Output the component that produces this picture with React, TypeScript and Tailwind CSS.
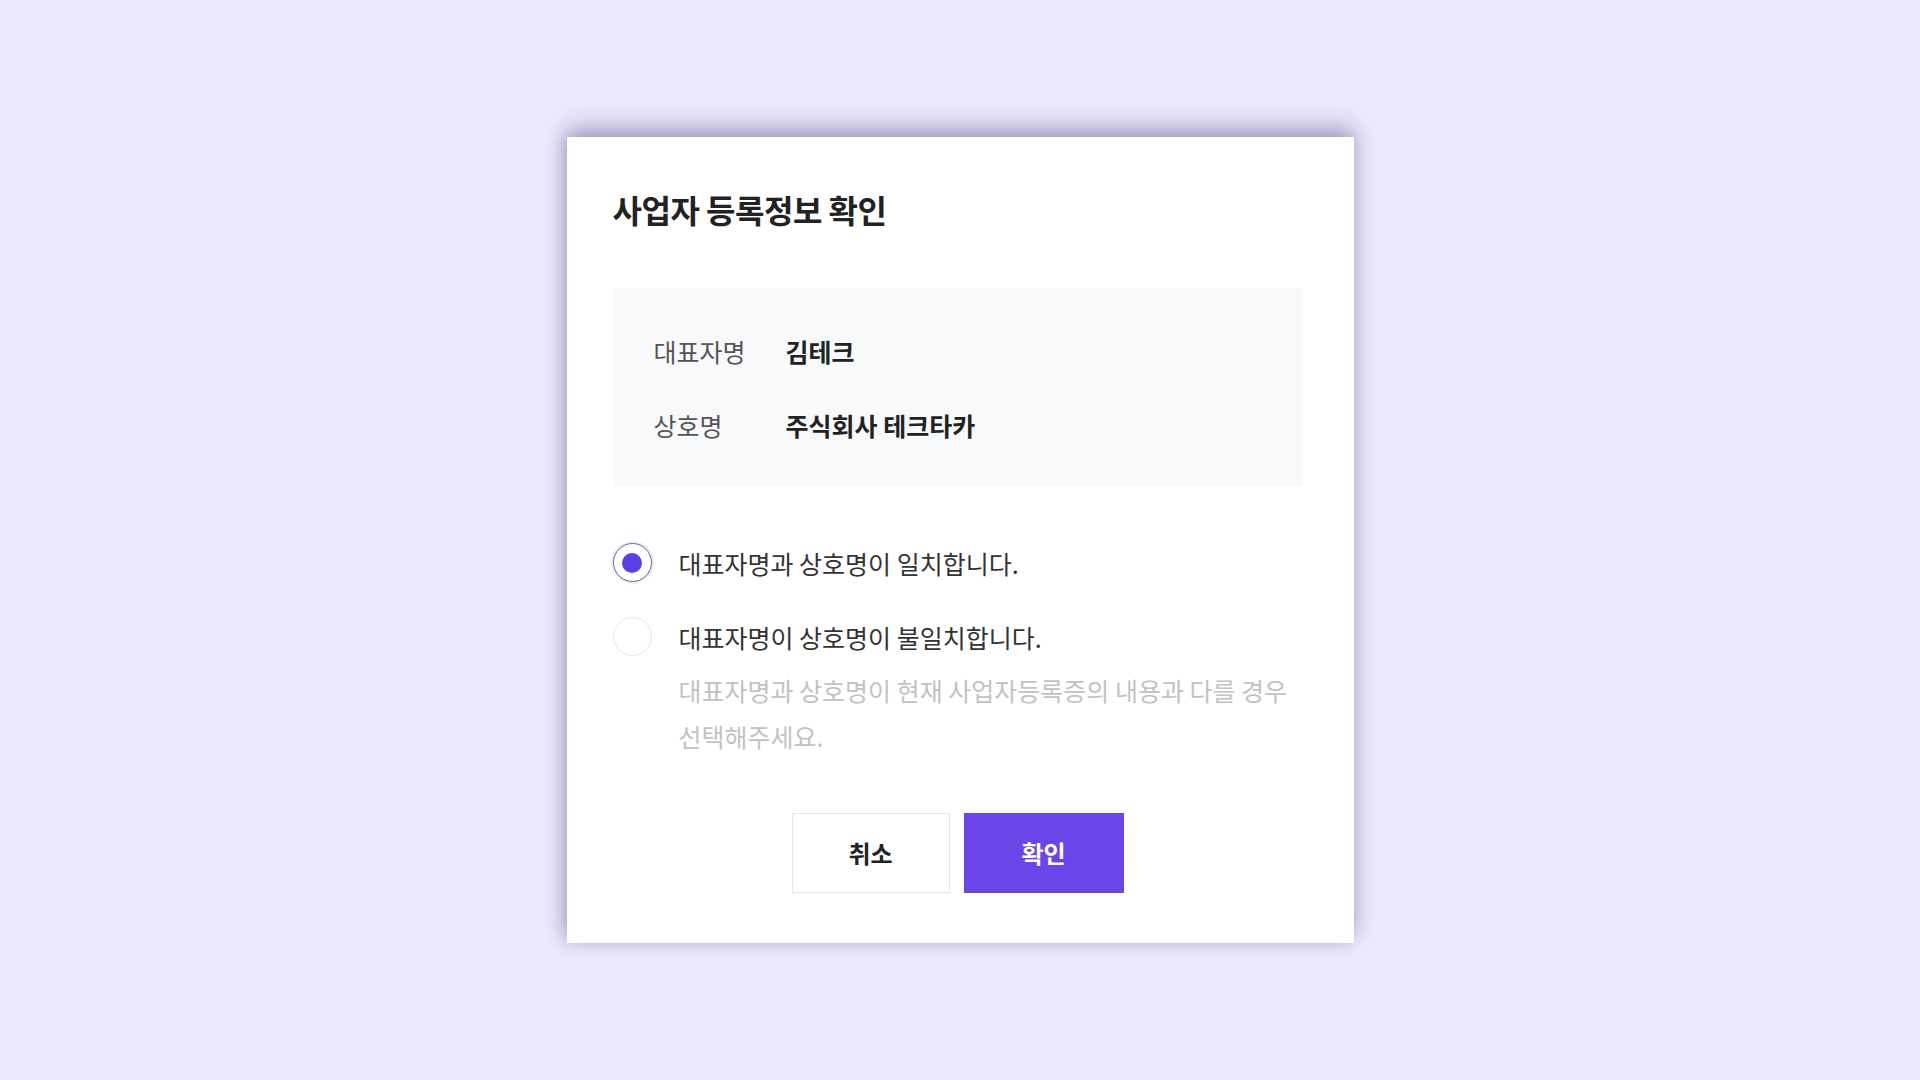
import { useState } from 'react'

const FONT = { fontFamily: '"Noto Sans CJK KR", "Noto Sans", sans-serif' }

function Radio({ checked }: { checked: boolean }) {
  return (
    <span
      className={
        checked
          ? 'flex h-[39px] w-[39px] shrink-0 items-center justify-center rounded-full border border-[#6e6a80] bg-white shadow-[0_0_0_2px_rgba(120,90,240,0.12)]'
          : 'flex h-[39px] w-[39px] shrink-0 items-center justify-center rounded-full border border-[#e8e8ec] bg-white'
      }
    >
      {checked && <span className="h-[20px] w-[20px] rounded-full bg-[#5b3fe4]" />}
    </span>
  )
}

export default function App() {
  const [match, setMatch] = useState(true)

  return (
    <div className="flex min-h-screen w-full bg-[#ece9fd] pt-[137px] justify-center" style={FONT}>
      <div className="flex h-[806px] w-[787px] flex-col bg-white pl-[46px] pr-[51px] pt-[50px] pb-[50px] shadow-[0_-10px_22px_rgba(70,60,120,0.38),-4px_0_14px_rgba(70,60,120,0.2)]">
        <h1 className="text-[32px] font-bold leading-[44px] tracking-[-0.5px] text-[#222]">
          사업자 등록정보 확인
        </h1>

        <div className="mt-[57px] flex flex-col gap-[40px] bg-[#f8f9fb] px-[41px] pt-[46px] pb-[44px]">
          <div className="flex items-center text-[25px] leading-[34px]">
            <span className="w-[132px] text-[#555]">대표자명</span>
            <span className="font-bold text-[#222]">김테크</span>
          </div>
          <div className="flex items-center text-[25px] leading-[34px]">
            <span className="w-[132px] text-[#555]">상호명</span>
            <span className="font-bold text-[#222]">주식회사 테크타카</span>
          </div>
        </div>

        <div className="mt-[57px] flex flex-col gap-[35px]">
          <button onClick={() => setMatch(true)} className="flex items-center gap-[27px] text-left">
            <Radio checked={match} />
            <span className="text-[25px] leading-[34px] text-[#333]">대표자명과 상호명이 일치합니다.</span>
          </button>
          <div className="flex flex-col">
            <button onClick={() => setMatch(false)} className="flex items-center gap-[27px] text-left">
              <Radio checked={!match} />
              <span className="text-[25px] leading-[34px] text-[#333]">대표자명이 상호명이 불일치합니다.</span>
            </button>
            <p className="mt-[11px] pl-[66px] text-[25px] leading-[46px] text-[#c2c2c2]">
              대표자명과 상호명이 현재 사업자등록증의 내용과 다를 경우
              <br />
              선택해주세요.
            </p>
          </div>
        </div>

        <div className="mt-auto flex justify-center gap-[14px]">
          <button className="h-[80px] w-[158px] border border-[#e6e6e6] bg-white text-[24px] font-bold text-[#222]">
            취소
          </button>
          <button className="h-[80px] w-[160px] bg-[#6a45e8] text-[24px] font-bold text-white">
            확인
          </button>
        </div>
      </div>
    </div>
  )
}
